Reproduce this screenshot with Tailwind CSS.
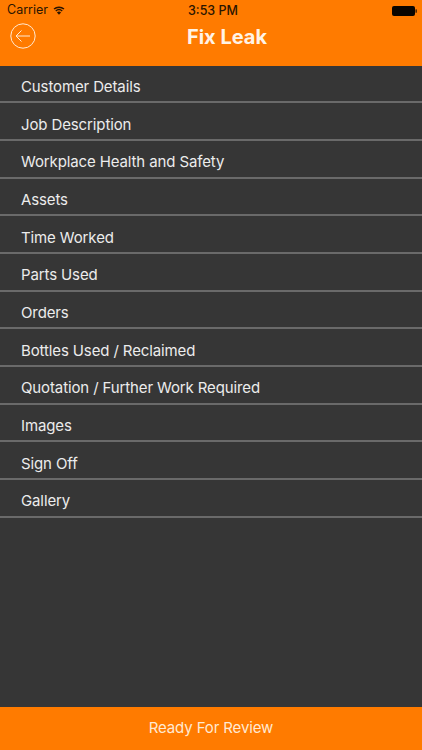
<!DOCTYPE html>
<html>
<head>
<meta charset="utf-8">
<script src="https://cdn.jsdelivr.net/npm/@tailwindcss/browser@4"></script>
</head>
<body class="m-0">
<div class="w-[422px] h-[750px] flex flex-col overflow-hidden bg-[#363636] font-['Inter','Liberation_Sans',sans-serif]">
  <header class="h-[65.5px] shrink-0 bg-[#ff7b00] flex flex-col">
    <div class="h-[20px] relative flex items-center justify-between pl-[7px] pr-[5px] text-[12.5px] text-[#2a1500] pt-[1px]">
      <div class="flex items-center gap-[5px]">
        <span>Carrier</span>
        <svg class="w-[12px] h-[9px]" viewBox="0 0 13 10"><path d="M6.5 9.8 L4.2 7.1 A3.4 3.4 0 0 1 8.8 7.1 Z M3.4 6.2 L2.4 5 A6.2 6.2 0 0 1 10.6 5 L9.6 6.2 A4.6 4.6 0 0 0 3.4 6.2 Z M1.6 4 L0.4 2.8 A9 9 0 0 1 12.6 2.8 L11.4 4 A7.4 7.4 0 0 0 1.6 4 Z" fill="#2a1500"/></svg>
      </div>
      <span class="absolute left-[188px] top-[2px] font-medium">3:53 PM</span>
      <svg class="w-[25px] h-[10px]" viewBox="0 0 25 10"><rect x="0" y="0" width="23" height="10" rx="2" fill="#0a0500"/><rect x="23.5" y="3.2" width="1.3" height="3.6" rx="0.6" fill="#2a1500"/></svg>
    </div>
    <div class="relative flex-1 flex items-start justify-center pl-[32px]">
      <svg class="absolute left-[10px] top-[2.5px] w-[26px] h-[26px]" viewBox="0 0 26 26" fill="none" stroke="#ffe9d2" stroke-width="1"><circle cx="13" cy="13" r="12.2"/><path d="M6 13 H20 M11.5 7.5 L6 13 L11.5 18.5"/></svg>
      <h1 class="text-[20px] leading-[32px] pt-[1px] font-bold text-[#fff3e6]">Fix Leak</h1>
    </div>
  </header>
  <ul class="flex-1 m-0 p-0 list-none text-[15px] tracking-[-0.12px] text-[#ececec]">
    <li class="h-[37.68px] border-b-2 border-[#6a6a6a] pl-[21px] pt-[8px] flex items-center">Customer Details</li>
    <li class="h-[37.68px] border-b-2 border-[#6a6a6a] pl-[21px] pt-[8px] flex items-center">Job Description</li>
    <li class="h-[37.68px] border-b-2 border-[#6a6a6a] pl-[21px] pt-[8px] flex items-center">Workplace Health and Safety</li>
    <li class="h-[37.68px] border-b-2 border-[#6a6a6a] pl-[21px] pt-[8px] flex items-center">Assets</li>
    <li class="h-[37.68px] border-b-2 border-[#6a6a6a] pl-[21px] pt-[8px] flex items-center">Time Worked</li>
    <li class="h-[37.68px] border-b-2 border-[#6a6a6a] pl-[21px] pt-[8px] flex items-center">Parts Used</li>
    <li class="h-[37.68px] border-b-2 border-[#6a6a6a] pl-[21px] pt-[8px] flex items-center">Orders</li>
    <li class="h-[37.68px] border-b-2 border-[#6a6a6a] pl-[21px] pt-[8px] flex items-center">Bottles Used / Reclaimed</li>
    <li class="h-[37.68px] border-b-2 border-[#6a6a6a] pl-[21px] pt-[8px] flex items-center">Quotation / Further Work Required</li>
    <li class="h-[37.68px] border-b-2 border-[#6a6a6a] pl-[21px] pt-[8px] flex items-center">Images</li>
    <li class="h-[37.68px] border-b-2 border-[#6a6a6a] pl-[21px] pt-[8px] flex items-center">Sign Off</li>
    <li class="h-[37.68px] border-b-2 border-[#6a6a6a] pl-[21px] pt-[8px] flex items-center">Gallery</li>
  </ul>
  <footer class="h-[43px] shrink-0 bg-[#ff7b00] flex items-center justify-center text-[15px] tracking-[-0.12px] text-[#ffe9d2]">Ready For Review</footer>
</div>
</body>
</html>
